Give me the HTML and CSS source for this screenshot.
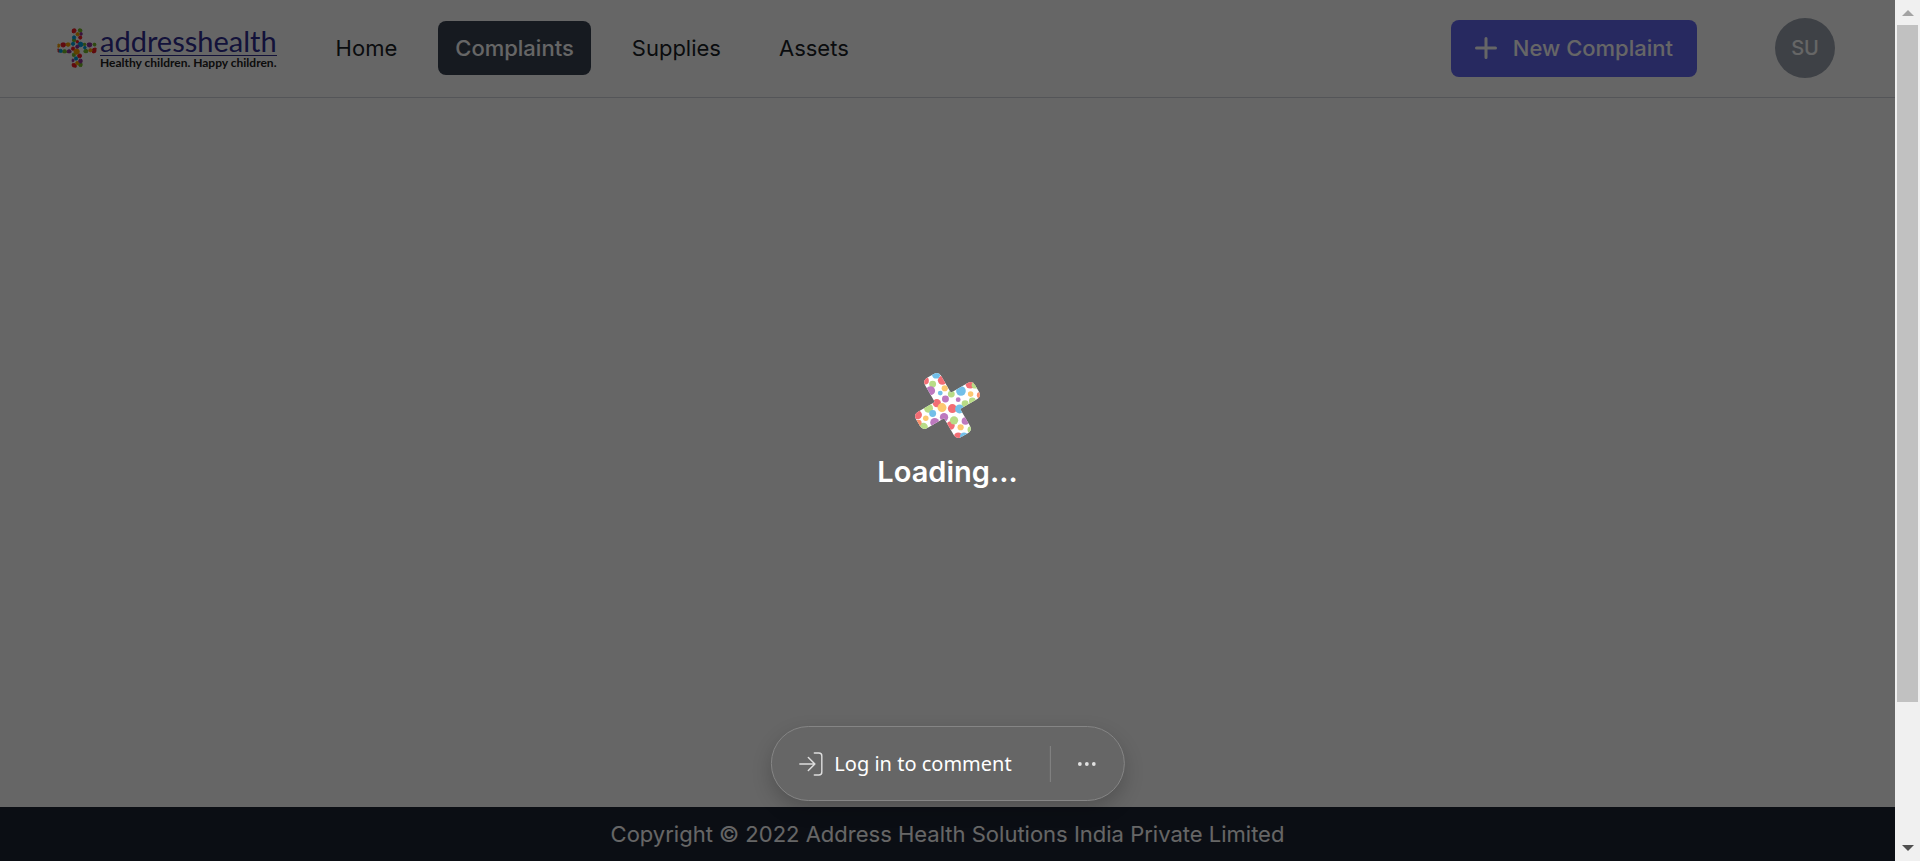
FILE: index.html
```html
<!DOCTYPE html>
<html lang="en">
<head>
<meta charset="utf-8">
<meta name="viewport" content="width=device-width, initial-scale=1">
<title>Address Health</title>
<link rel="stylesheet" href="styles.css">
</head>
<body>
<div class="shell">
  <div class="page">
    <header class="header">
      <a class="logo" href="#" aria-label="addresshealth">
        <svg class="logo-mark" viewBox="20 26 122 122" aria-hidden="true">
          <defs><clipPath id="plus"><path d="M74 27h15q9 0 9 9v34h34q9 0 9 9v15q0 9-9 9H98v35q0 9-9 9H74q-9 0-9-9v-35H30q-9 0-9-9V79q0-9 9-9h35V36q0-9 9-9z"/></clipPath></defs>
          <g clip-path="url(#plus)" stroke-width="3">
            <g fill="#f01c24" stroke="#f01c24"><circle cx="71" cy="34" r="7"/><circle cx="39" cy="77" r="7"/><circle cx="91" cy="55" r="5"/><circle cx="69" cy="89" r="5"/><circle cx="136" cy="96" r="9"/><circle cx="89" cy="111" r="6"/><circle cx="71" cy="142" r="8"/><circle cx="23" cy="95" r="5"/><circle cx="82" cy="68" r="4"/></g>
            <g fill="#76b82a" stroke="#76b82a"><circle cx="91" cy="33" r="6"/><circle cx="72" cy="63" r="5"/><circle cx="43" cy="98" r="6"/><circle cx="108" cy="97" r="6"/><circle cx="135" cy="76" r="5"/><circle cx="92" cy="138" r="6"/><circle cx="71" cy="108" r="5"/><circle cx="104" cy="76" r="4"/></g>
            <g fill="#009fd6" stroke="#009fd6"><circle cx="72" cy="55" r="5"/><circle cx="92" cy="76" r="7"/><circle cx="31" cy="96" r="5"/><circle cx="78" cy="119" r="5"/><circle cx="69" cy="74" r="5"/><circle cx="105" cy="86" r="4"/></g>
            <g fill="#f5a000" stroke="#f5a000"><circle cx="83" cy="45" r="5"/><circle cx="80" cy="98" r="8"/><circle cx="54" cy="76" r="6"/><circle cx="122" cy="94" r="5"/><circle cx="82" cy="133" r="5"/><circle cx="24" cy="80" r="5"/></g>
            <g fill="#8e3197" stroke="#8e3197"><circle cx="94" cy="44" r="4"/><circle cx="82" cy="83" r="5"/><circle cx="57" cy="98" r="6"/><circle cx="119" cy="77" r="7"/><circle cx="92" cy="127" r="6"/><circle cx="68" cy="125" r="4"/></g>
          </g>
        </svg>
        <span class="logo-words">
          <span class="logo-name">addresshealth</span>
          <span class="logo-tag">Healthy children. Happy children.</span>
        </span>
      </a>
      <nav class="nav">
        <a class="nav-link" href="#">Home</a>
        <a class="nav-link nav-active" href="#" aria-current="page">Complaints</a>
        <a class="nav-link" href="#">Supplies</a>
        <a class="nav-link" href="#">Assets</a>
      </nav>
      <div class="actions">
        <button class="new-btn" type="button">
          <svg class="plus-icon" viewBox="0 0 22 22" aria-hidden="true"><path d="M11 1.500v19M1.500 11h19" fill="none" stroke="currentColor" stroke-width="3" stroke-linecap="round"/></svg>
          New Complaint
        </button>
        <button class="avatar" type="button">SU</button>
      </div>
    </header>
    <main class="main"></main>
    <footer class="footer">Copyright © 2022 Address Health Solutions India Private Limited</footer>

    <div class="overlay" role="status">
      <svg class="spinner" viewBox="42 33 200 200" aria-hidden="true">
        <defs><clipPath id="cross"><path transform="rotate(-30 142 133)" d="M131 34h22q16 0 16 16v56h56q16 0 16 16v22q0 16-16 16h-56v56q0 16-16 16h-22q-16 0-16-16v-56H59q-16 0-16-16v-22q0-16 16-16h56V50q0-16 16-16z"/></clipPath></defs>
        <g clip-path="url(#cross)">
          <rect x="30" y="20" width="225" height="225" fill="#fff"/>
          <g fill="#f26d74"><circle cx="77" cy="61" r="11"/><circle cx="127" cy="60" r="13"/><circle cx="208" cy="70" r="14"/><circle cx="111" cy="126" r="12"/><circle cx="156" cy="142" r="13"/><circle cx="55" cy="160" r="13"/><circle cx="151" cy="191" r="12"/><circle cx="173" cy="223" r="12"/></g>
          <g fill="#b8dc86"><circle cx="99" cy="71" r="10"/><circle cx="153" cy="100" r="10"/><circle cx="222" cy="74" r="10"/><circle cx="193" cy="128" r="10"/><circle cx="214" cy="120" r="10"/><circle cx="87" cy="141" r="13"/><circle cx="72" cy="196" r="13"/><circle cx="161" cy="176" r="12"/><circle cx="210" cy="203" r="10"/></g>
          <g fill="#72bfe8"><circle cx="109" cy="43" r="12"/><circle cx="121" cy="97" r="7"/><circle cx="181" cy="91" r="14"/><circle cx="177" cy="143" r="13"/><circle cx="99" cy="156" r="10"/><circle cx="190" cy="223" r="12"/></g>
          <g fill="#bd79bf"><circle cx="93" cy="90" r="13"/><circle cx="136" cy="114" r="10"/><circle cx="173" cy="116" r="7"/><circle cx="132" cy="167" r="12"/><circle cx="105" cy="182" r="13"/><circle cx="194" cy="178" r="11"/></g>
          <g fill="#fdc870"><circle cx="134" cy="83" r="9"/><circle cx="209" cy="100" r="8"/><circle cx="126" cy="139" r="13"/><circle cx="79" cy="170" r="8"/><circle cx="180" cy="196" r="9"/></g>
          <g fill="#f8906c"><circle cx="236" cy="103" r="9"/><circle cx="58" cy="183" r="9"/></g>
        </g>
      </svg>
      <p class="loading">Loading...</p>
    </div>

    <div class="comment-bar">
      <button class="login-btn" type="button">
        <svg class="login-icon" viewBox="0 0 24 24" fill="none" stroke="currentColor" stroke-width="1.500" stroke-linecap="round" stroke-linejoin="round" aria-hidden="true"><path d="M1 12h15M9.500 5.500 16 12l-6.500 6.500M15.500 1H20q3 0 3 3v16q0 3-3 3h-4.500"/></svg>
        Log in to comment
      </button>
      <button class="more-btn" type="button" aria-label="More options">
        <svg class="more-icon" viewBox="0 0 18 4" fill="currentColor" aria-hidden="true"><circle cx="2" cy="2" r="1.900"/><circle cx="9" cy="2" r="1.900"/><circle cx="16" cy="2" r="1.900"/></svg>
      </button>
    </div>
  </div>
  <div class="scrollbar" aria-hidden="true">
    <svg class="scroll-arrow arrow-up" viewBox="0 0 12 6"><path d="M0 6 6 0l6 6z" fill="currentColor"/></svg>
    <div class="scroll-track"><div class="scroll-thumb"></div></div>
    <svg class="scroll-arrow" viewBox="0 0 12 6"><path d="M0 0l6 6 6-6z" fill="currentColor"/></svg>
  </div>
</div>
</body>
</html>
```
FILE: styles.css
```css
* { box-sizing: border-box; }
body {
  margin: 0;
  font-family: Inter, "Liberation Sans", sans-serif;
  font-size: 22px;
  line-height: 30px;
  color: #1a1e26;
}
a { color: inherit; text-decoration: none; }
button { font: inherit; border: 0; cursor: pointer; }

.shell { display: flex; min-height: 100vh; }
.page {
  position: relative;
  flex: 1;
  display: flex;
  flex-direction: column;
  background: #fff;
}

.header {
  display: flex;
  align-items: center;
  padding: 18px 60px 19px 57px;
  border-bottom: 1px solid #d1d5db;
}
.logo { display: flex; align-items: center; gap: 3px; }
.logo-mark { width: 40px; height: 40px; }
.logo-words { display: flex; flex-direction: column; }
.logo-name {
  font-family: Lato, sans-serif;
  font-size: 29px;
  line-height: 28px;
  color: #312e91;
  border-bottom: 1px solid #312e91;
}
.logo-tag {
  font-family: Lato, sans-serif;
  font-size: 12px;
  font-weight: 700;
  line-height: 14px;
  color: #222;
}

.nav { display: flex; gap: 24px; margin-left: 42px; }
.nav-link { padding: 12px 17px; border-radius: 8px; }
.nav-active { background: #374151; color: #fff; font-weight: 500; }

.actions { display: flex; align-items: center; gap: 78px; margin-left: auto; }
.new-btn {
  display: flex;
  align-items: center;
  gap: 16px;
  padding: 13px 24px 14px;
  border-radius: 8px;
  background: #6366f1;
  color: #fff;
  font-weight: 500;
}
.plus-icon { width: 22px; height: 22px; }
.avatar {
  width: 60px;
  height: 60px;
  padding: 0;
  border-radius: 50%;
  background: #9ca3af;
  color: #fff;
  font-size: 20px;
  font-weight: 500;
}

.main { flex: 1; }
.footer {
  padding: 12px;
  background: #1c2333;
  color: #fff;
  text-align: center;
}

.overlay {
  position: absolute;
  inset: 0;
  display: flex;
  flex-direction: column;
  align-items: center;
  justify-content: center;
  gap: 14px;
  background: rgba(0, 0, 0, 0.6);
}
.spinner { width: 69px; height: 69px; }
.loading {
  margin: 0;
  color: #fff;
  font-size: 29px;
  font-weight: 600;
  line-height: 36px;
}

.comment-bar {
  position: absolute;
  bottom: 60px;
  left: 50%;
  transform: translateX(-50%);
  display: flex;
  align-items: center;
  height: 75px;
  border: 1px solid #858585;
  border-radius: 38px;
  background: #666;
  box-shadow: 0 8px 20px rgba(0, 0, 0, 0.2);
  color: #fff;
}
.login-btn {
  display: flex;
  align-items: center;
  gap: 12px;
  padding: 0 38px 0 27px;
  background: none;
  color: #fff;
  font-family: "Noto Sans", sans-serif;
  font-size: 20px;
  line-height: 36px;
  white-space: nowrap;
}
.login-icon { width: 24px; height: 24px; color: #ddd; }
.more-btn {
  display: flex;
  align-items: center;
  height: 36px;
  padding: 0 28px 0 27px;
  border-left: 1px solid #858585;
  background: none;
  color: #e0e0e0;
}
.more-icon { width: 18px; height: 4px; }

.scrollbar {
  width: 25px;
  display: flex;
  flex-direction: column;
  align-items: center;
  gap: 9px;
  padding: 10px 1px;
  background: #f0f0f0;
}
.scroll-arrow { width: 12px; height: 6px; color: #505050; }
.arrow-up { color: #a3a3a3; }
.scroll-track { flex: 1; width: 21px; }
.scroll-thumb { height: 83.5%; background: #c1c1c1; }
```
